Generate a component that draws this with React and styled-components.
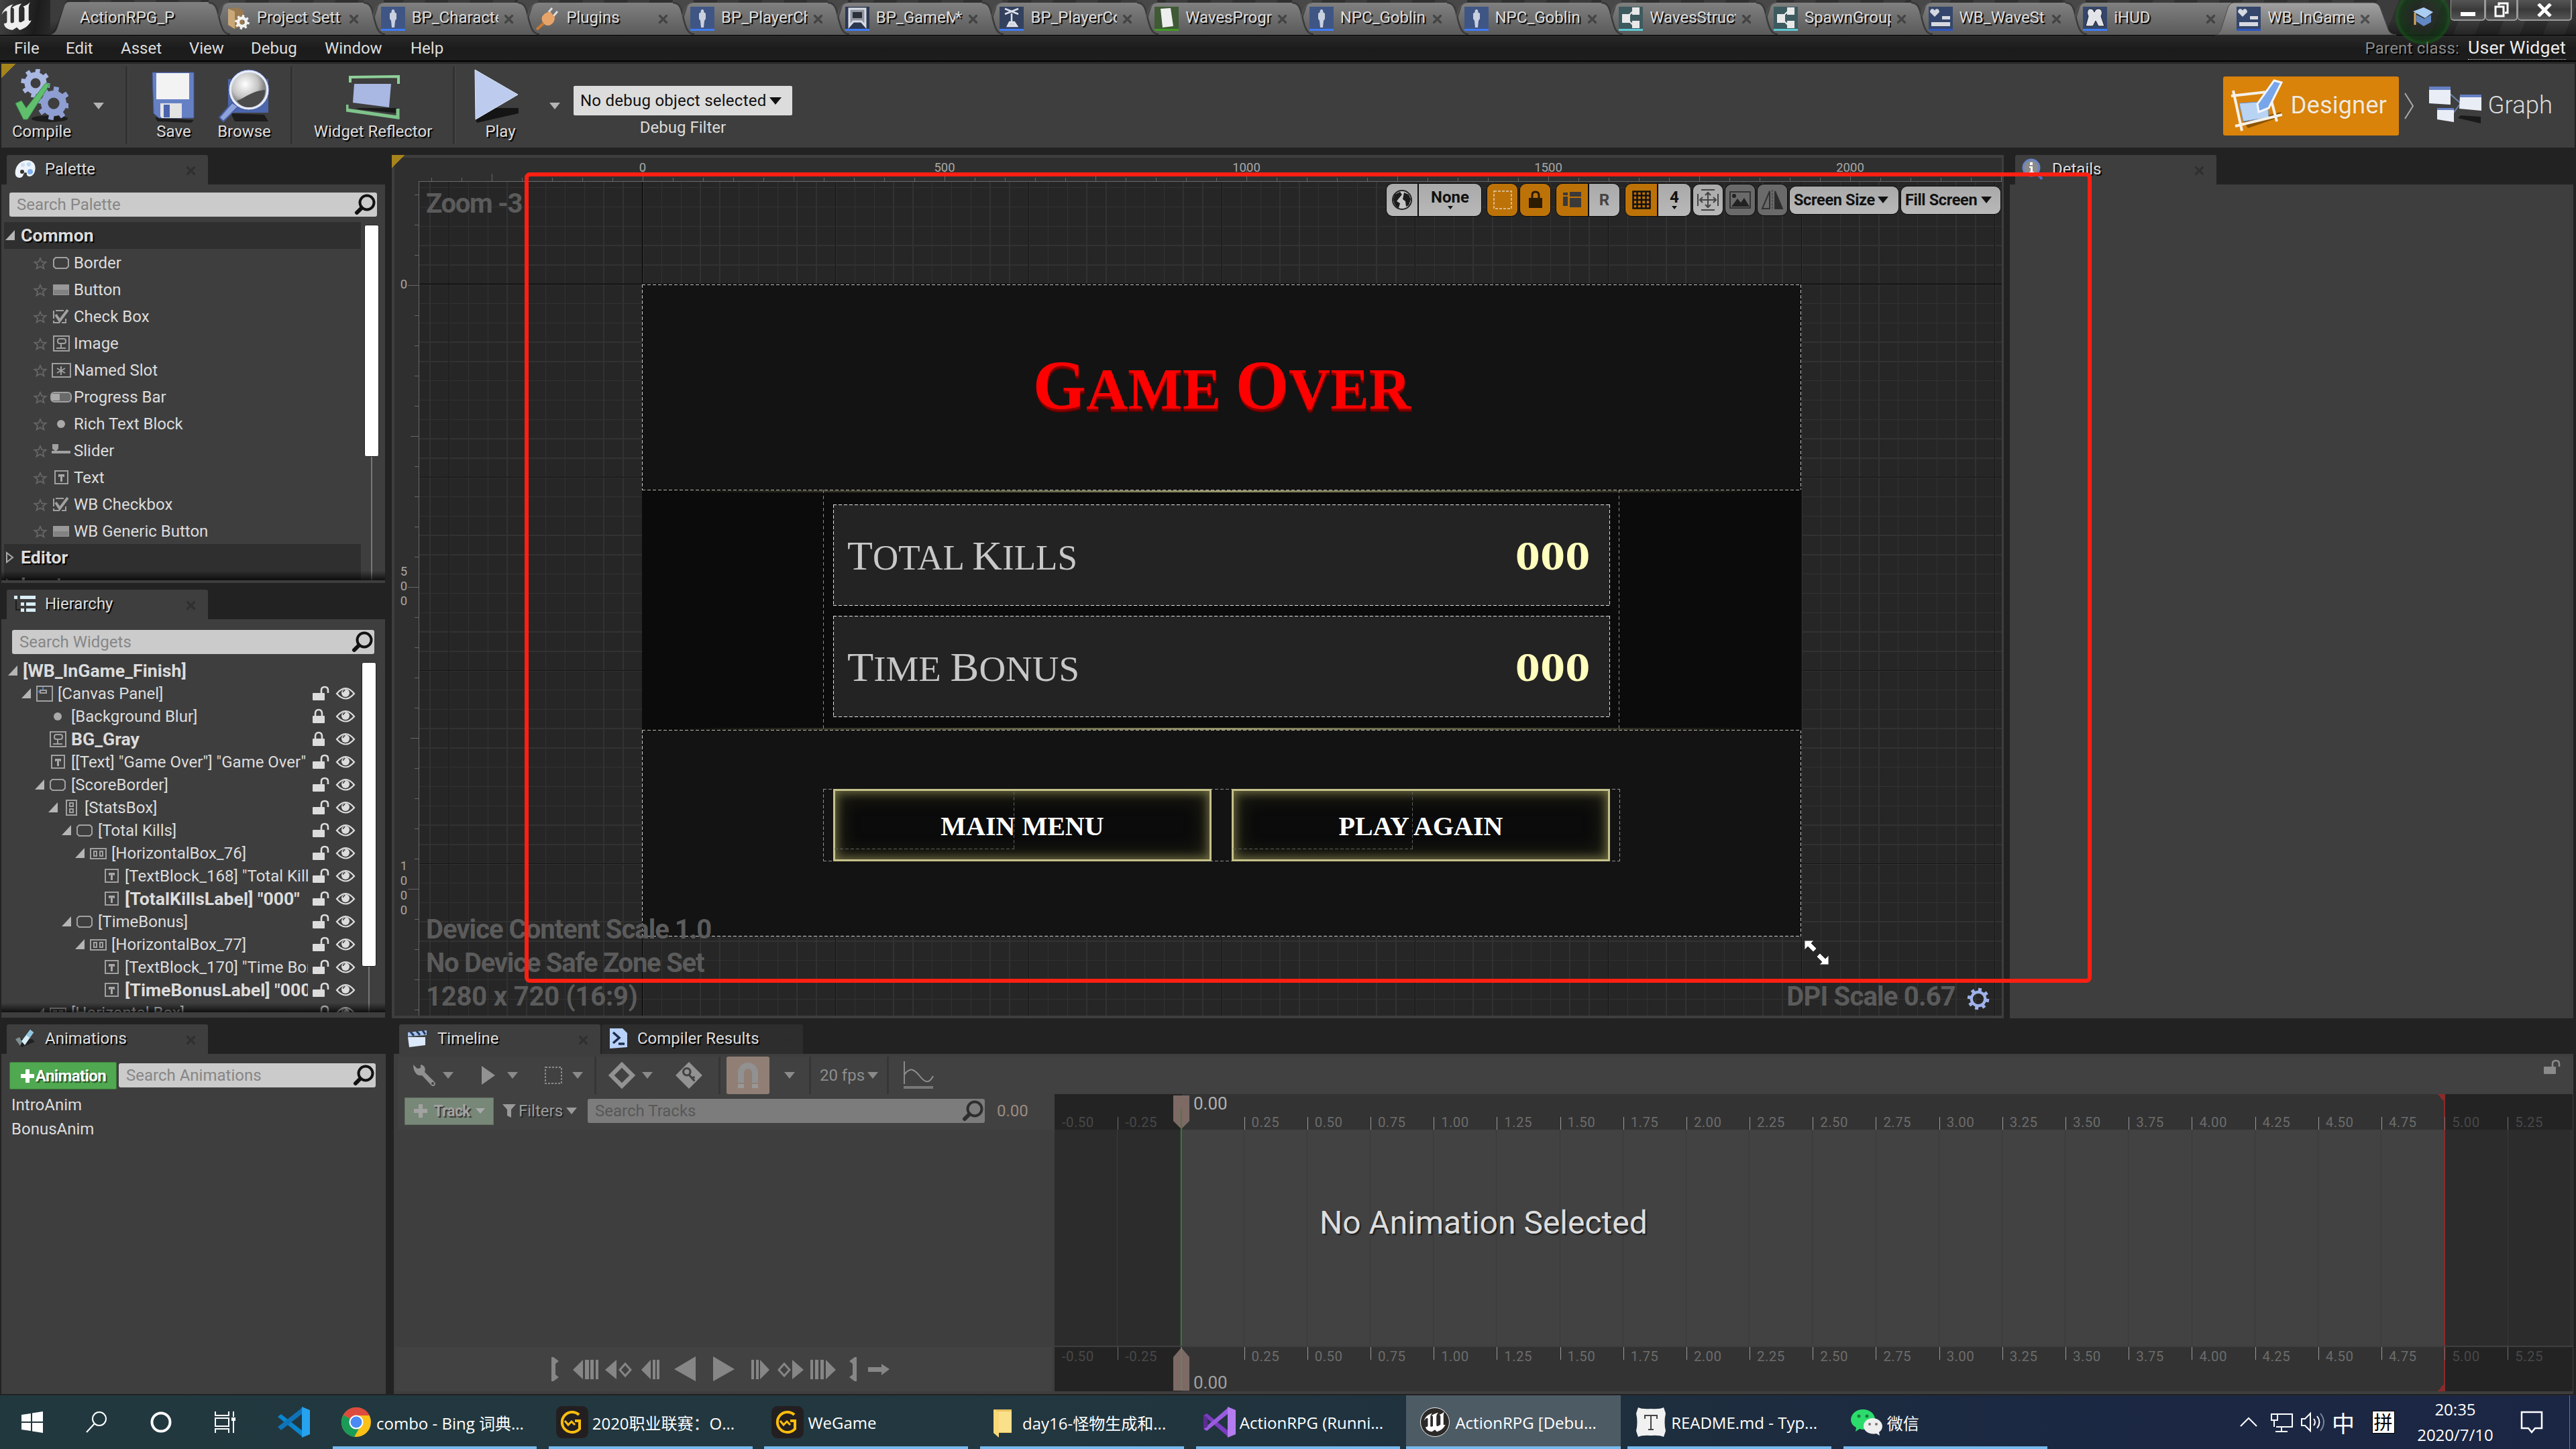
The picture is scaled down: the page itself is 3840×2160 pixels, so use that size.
import React from "react";
import styled, { createGlobalStyle } from "styled-components";

const Global = createGlobalStyle`
  * { box-sizing: border-box; }
  body { margin: 0; background: #222; overflow: hidden; }
  svg { display: block; flex: none; }
`;

const UI = `Roboto, "Liberation Sans", "Noto Sans CJK SC", sans-serif`;
const SERIF = `"Liberation Serif", "Noto Sans CJK SC", serif`;
const WIN = `"Open Sans", "Noto Sans CJK SC", sans-serif`;

const Screen = styled.div`
  position: relative;
  width: 3840px;
  height: 2160px;
  display: flex;
  flex-direction: column;
  background: #222;
  color: #dcdcdc;
  font: 24px ${UI};
  overflow: hidden;
  white-space: nowrap;
`;

/* ---------- title bar ---------- */
const TitleBar = styled.div`
  height: 53px;
  flex: none;
  display: flex;
  border-bottom: 1px solid #000;
  background: linear-gradient(#0000 60%, #0006), repeating-linear-gradient(112deg, #3c3c3c 0 30px, #303030 30px 62px);
`;
const LogoBox = styled.div`
  width: 75px;
  background: linear-gradient(100deg, #444, #1c1c1c 70%, #2a2a2a);
`;
const FileTab = styled.div`
  position: relative;
  width: ${(p) => p.w}px;
  height: 52px;
  display: flex;
  align-items: center;
  padding-left: ${(p) => p.pl}px;
  flex: none;
`;
const TabShape = styled.svg`
  position: absolute;
  left: 0;
  top: 0;
  overflow: visible;
`;
const TabIcon = styled.span`
  position: relative;
  width: 36px;
  height: 36px;
  margin: 4px 10px 0 0;
  flex: none;
`;
const TabLabel = styled.span`
  position: relative;
  width: ${(p) => p.w || 130}px;
  overflow: hidden;
  line-height: 40px;
  text-shadow: 2px 2px 1px #000;
`;
const CloseMark = styled.span`
  position: relative;
  width: 13px;
  height: 13px;
  margin-left: ${(p) => p.ml || 9}px;
  margin-top: 4px;
  opacity: ${(p) => (p.faint ? 0.6 : 0.75)};
  background: linear-gradient(45deg, #0000 39%, #2c2c2c 39% 61%, #0000 61%), linear-gradient(-45deg, #0000 39%, #2c2c2c 39% 61%, #0000 61%);
`;
const Tutorial = styled.div`
  width: 83px;
  display: flex;
  justify-content: center;
`;
const TutorialGlow = styled.div`
  position: relative;
  width: 84px;
  height: 84px;
  margin-top: -17px;
  flex: none;
  border-radius: 50%;
  display: grid;
  place-items: center;
  background: radial-gradient(#1c241c99 30%, #0f3a13aa 58%, #14601799 66%, #0000 71%);
`;
const WinButtons = styled.div`
  display: flex;
  height: 31px;
`;
const WinButton = styled.div`
  width: ${(p) => p.w}px;
  display: grid;
  place-items: center;
  border: 2px solid #9a9a9a;
  border-top: 0;
  border-left-width: 1px;
  border-radius: 0 0 5px 5px;
  background: linear-gradient(#555, #3a3a3a 50%, #555);
`;

/* ---------- menu ---------- */
const MenuBar = styled.div`
  height: 39px;
  flex: none;
  display: flex;
  align-items: center;
  padding: 0 15px 0 21px;
  background: linear-gradient(#282828, #1b1b1b 55%, #1e1e1e);
  border-bottom: 2px solid #000;
`;
const MenuItem = styled.span`
  width: ${(p) => p.w}px;
  color: #ddd;
  padding-top: 1px;
`;
const ParentClass = styled.span`
  margin-left: auto;
  color: #8a8a8a;
  text-shadow: 2px 2px 0 #000;
  letter-spacing: 0.2px;
  margin-right: 13px;
`;
const ParentLink = styled.span`
  font-size: 26.67px;
  letter-spacing: 0.2px;
  line-height: 33px;
  color: #eee;
  border-bottom: 1px dotted #ccc;
`;

/* ---------- toolbar ---------- */
const Toolbar = styled.div`
  height: 128px;
  flex: none;
  display: flex;
  margin: 0 2px;
  border-top: 3px solid #262626;
  background: #3e3e3e;
`;
const Corner = styled.div`
  width: 22px;
  height: 22px;
  margin-right: -22px;
  flex: none;
  background: linear-gradient(135deg, #a5841b 50%, #0000 50%);
`;
const ToolButton = styled.div`
  width: ${(p) => p.w}px;
  margin-left: ${(p) => p.ml || 0}px;
  padding-top: 8px;
  display: flex;
  flex-direction: column;
  align-items: center;
  text-shadow: 2px 2px 1px #000;
  line-height: 26px;
`;
const Caret = styled.i`
  flex: none;
  width: 0;
  height: 0;
  border: ${(p) => p.s || 8}px solid transparent;
  border-top: ${(p) => (p.s || 8) * 1.25}px solid ${(p) => p.c || "#b4b4b4"};
  border-bottom: 0;
  margin-left: ${(p) => p.ml || 0}px;
`;
const CaretCell = styled.div`
  width: ${(p) => p.w}px;
  padding-top: 58px;
  display: flex;
  justify-content: center;
`;
const Divider = styled.div`
  width: 4px;
  margin: 4px 0 5px ${(p) => p.ml || 0}px;
  background: #313131;
  border-right: 1px solid #484848;
`;
const DebugFilter = styled.div`
  margin-left: 14px;
  padding-top: 33px;
  display: flex;
  flex-direction: column;
  align-items: center;
  line-height: 36px;
`;
const Combo = styled.div`
  width: 326px;
  height: 44px;
  display: flex;
  align-items: center;
  padding-left: 10px;
  letter-spacing: 0.25px;
  color: #111;
  background: #dcdcdc;
  border-radius: 2px;
`;
const ModeSwitch = styled.div`
  margin-left: auto;
  display: flex;
  align-items: center;
  height: 88px;
  margin-top: 19px;
  padding-right: 33px;
  font-weight: 300;
  font-size: 36.5px;
  line-height: 40px;
`;
const DesignerMode = styled.div`
  width: 262px;
  height: 88px;
  display: flex;
  align-items: center;
  gap: 11px;
  padding: 0 0 2px 10px;
  background: #d9830b;
  border-radius: 3px;
  color: #f3e9da;
  font-weight: 400;
  text-shadow: 0 0 1px #b36800;
`;
const ModeLabel = styled.span`
  padding: 0 0 2px 9px;
`;

/* ---------- docks ---------- */
const Workspace = styled.div`
  flex: none;
  height: 1298px;
  display: flex;
  padding: 11px 4px 0 2px;
`;
const LeftColumn = styled.div`
  width: 572px;
  margin-right: 10px;
  flex: none;
  display: flex;
  flex-direction: column;
`;
const Dock = styled.div`
  display: flex;
  flex-direction: column;
  width: ${(p) => p.w || 572}px;
  height: ${(p) => p.h}px;
  margin-bottom: ${(p) => p.mb || 0}px;
  flex: none;
`;
const DockTabs = styled.div`
  display: flex;
  gap: 2px;
  padding-left: 8px;
  height: 44px;
  flex: none;
`;
const DockTab = styled.div`
  width: 300px;
  display: flex;
  align-items: center;
  padding: 0 19px 2px 10px;
  background: ${(p) => (p.dim ? "#2d2d2d" : "#3e3e3e")};
  text-shadow: 2px 2px 1px #000;
  border-radius: 3px 3px 0 0;
`;
const DockTabText = styled.span`
  margin-left: 13px;
  flex: 1;
`;
const DockBody = styled.div`
  flex: 1;
  min-height: 0;
  display: flex;
  flex-direction: column;
  background: #3e3e3e;
  padding: ${(p) => p.pad || "0"};
  overflow: hidden;
`;
const Search = styled.div`
  height: 36px;
  flex: ${(p) => (p.w ? "none" : "1")};
  width: ${(p) => (p.w ? p.w + "px" : "auto")};
  display: flex;
  align-items: center;
  justify-content: space-between;
  padding: 0 0 0 11px;
  background: ${(p) => (p.dim ? "#7c7c7c" : "#cbcbcb")};
  color: ${(p) => (p.dim ? "#585858" : "#868686")};
  border-radius: 3px;
`;
const SearchRow = styled.div`
  display: flex;
  flex: none;
  padding: ${(p) => p.pad};
`;
const Scroller = styled.div`
  position: relative;
  flex: 1;
  min-height: 0;
  display: flex;
  overflow: hidden;
  &::after {
    content: "";
    position: absolute;
    left: 0;
    right: 0;
    bottom: 0;
    height: 14px;
    background: linear-gradient(#0000, #000b);
  }
`;
const ScrollList = styled.div`
  width: ${(p) => p.w}px;
  flex: none;
`;
const ScrollTrack = styled.div`
  width: 22px;
  margin-left: ${(p) => p.ml}px;
  margin-top: ${(p) => p.mt}px;
  background: linear-gradient(90deg, #0000 10px, #777 10px 12px, #0000 12px);
`;
const ScrollThumb = styled.div`
  height: ${(p) => p.h}px;
  background: #fff;
  border: 1px solid #222;
  border-radius: 3px;
`;
const GroupHeader = styled.div`
  height: 40px;
  display: flex;
  align-items: center;
  margin-left: 4px;
  padding-left: 1px;
  gap: 7px;
  background: #2f2f2f;
  font-size: 26.67px;
  font-weight: 700;
  text-shadow: 2px 2px 1px #000;
`;
const PaletteRow = styled.div`
  height: 40px;
  display: flex;
  align-items: center;
  padding: 1px 0 0 46px;
  gap: 3px;
`;
const TreeRow = styled.div`
  height: 34px;
  display: flex;
  align-items: center;
  padding-left: ${(p) => p.indent}px;
  font-weight: ${(p) => (p.bold ? 700 : 400)};
  font-size: ${(p) => (p.bold ? 26.67 : 24)}px;
`;
const TreeLabel = styled.span`
  flex: 1;
  min-width: 0;
  overflow: hidden;
  line-height: 34px;
`;
const RowTools = styled.span`
  width: 79px;
  display: flex;
  padding-left: 6px;
  gap: 9px;
  align-items: center;
`;
const IconCell = styled.span`
  width: ${(p) => p.w || 36}px;
  flex: none;
  display: flex;
  justify-content: center;
`;

/* ---------- viewport ---------- */
const Viewport = styled.div`
  width: 2403px;
  height: 1287px;
  flex: none;
  display: grid;
  grid-template: 35px 1244px / 36px 2360px;
  border: 4px solid #3e3e3e;
  border-right-width: 3px;
  background: #2f2f2f;
  margin-right: 9px;
`;
const Ruler = styled.svg`
  font: 18.5px ${UI};
  overflow: hidden;
  fill: #a8a8a8;
`;
const CornerMark = styled.div`
  width: 20px;
  height: 20px;
  margin: -4px 0 0 -4px;
  background: linear-gradient(135deg, #a5841b 50%, #0000 50%);
`;
const Canvas = styled.div`
  position: relative;
  overflow: hidden;
  border-left: 1px solid #6a6a6a;
  border-top: 1px solid #6a6a6a;
  background:
    linear-gradient(#000, #000) 332px 0 / 1px 100% no-repeat,
    linear-gradient(#000, #000) 0 152px / 100% 1px no-repeat,
    linear-gradient(90deg, #141414 1px, #0000 1px) 44px 0 / 288px 288px,
    linear-gradient(#141414 1px, #0000 1px) 0 152px / 288px 288px,
    repeating-linear-gradient(90deg, #323232 0 1.5px, #0000 1.5px 28.8px) 44px 0 / 288px 288px,
    repeating-linear-gradient(#323232 0 1.5px, #0000 1.5px 28.8px) 0 152px / 288px 288px,
    #262626;
`;
const dash = (c = "#c9c9c9", sides = "tblr") => {
  const h = `repeating-linear-gradient(90deg, ${c} 0 5px, #0000 5px 8px)`;
  const v = `repeating-linear-gradient(${c} 0 5px, #0000 5px 8px)`;
  const m = {
    t: `${h} 0 0 / 100% 1px no-repeat`,
    b: `${h} 0 100% / 100% 1px no-repeat`,
    l: `${v} 0 0 / 1px 100% no-repeat`,
    r: `${v} 100% 0 / 1px 100% no-repeat`,
  };
  return sides.split("").map((s) => m[s]).join(",");
};
const Artboard = styled.div`
  position: absolute;
  left: 332px;
  top: 153px;
  width: 1728px;
  height: 972px;
  display: flex;
  flex-direction: column;
  background: ${dash()}, #131313;
  font-family: ${SERIF};
`;
const BoardTitle = styled.div`
  height: 306px;
  flex: none;
  display: grid;
  place-items: center;
  color: #f00;
  font-weight: 700;
  font-size: 87px;
  line-height: 100px;
  text-shadow: 0 3px 0 #8d0000, 1px 5px 0 #600000;
  b { font-size: 103px; }
`;
const Stretch = styled.span`
  display: inline-block;
  transform: scaleX(${(p) => p.x});
  transform-origin: ${(p) => p.o || "center"};
`;
const ScoreBorder = styled.div`
  height: 359px;
  flex: none;
  padding: 22px 285px 0;
  display: flex;
  flex-direction: column;
  gap: 15px;
  background:
    ${dash("#b5b5a8", "tb")},
    linear-gradient(90deg, #0000 3%, #96956a 50%, #0000 97%) 0 1px / 100% 3px no-repeat,
    linear-gradient(90deg, #0000 3%, #96956a 50%, #0000 97%) 0 calc(100% - 1px) / 100% 3px no-repeat,
    repeating-linear-gradient(#8a8a8a 0 5px, #0000 5px 9px) 270px 0 / 1px 100% no-repeat,
    repeating-linear-gradient(#8a8a8a 0 5px, #0000 5px 9px) 1456px 0 / 1px 100% no-repeat,
    #0b0b0b;
`;
const StatRow = styled.div`
  height: 151px;
  width: 1158px;
  flex: none;
  display: flex;
  align-items: center;
  justify-content: space-between;
  padding: 2px 30px 0 21px;
  background: ${dash("#e0e0e0")}, #232323;
  color: #c8c8c8;
  font-size: 53px;
  big { font-size: 62px; }
`;
const Score = styled.span`
  font-size: 61px;
  font-weight: 700;
  color: #ffffbd;
`;
const ButtonBar = styled.div`
  margin: 87px 270px 0;
  width: 1188px;
  height: 108px;
  display: flex;
  gap: 30px;
  padding: 0 15px;
  background: ${dash("#8f8f8f")};
`;
const GoldButton = styled.div`
  flex: 1;
  display: grid;
  place-items: center;
  position: relative;
  padding-top: 3px;
  color: #fff;
  font-size: 40px;
  font-weight: 700;
  background: ${dash("#fff")}, #0b0b0b;
  box-shadow: inset 0 0 0 3px #c5c18a, inset 0 0 14px 5px #6f6d43, inset 0 0 30px 6px #33321d;
  &::before {
    content: "";
    position: absolute;
    left: 2px;
    top: 4px;
    width: 268px;
    height: 86px;
    background: ${dash("#5d5d5d", "br")};
  }
`;
const CanvasNote = styled.div`
  position: absolute;
  ${(p) => (p.right ? `right: ${p.right}px;` : "left: 10px;")}
  ${(p) => (p.top ? `top: ${p.top}px;` : `bottom: ${p.bottom || 3}px;`)}
  font-size: 40px;
  font-weight: 700;
  letter-spacing: ${(p) => p.ls || -1}px;
  line-height: 50px;
  color: #5b5b5b;
`;
const OnCanvas = styled.div`
  position: absolute;
  left: ${(p) => p.x}px;
  top: ${(p) => p.y}px;
`;
const ViewTools = styled.div`
  position: absolute;
  right: 1px;
  top: 2px;
  height: 50px;
  display: flex;
  align-items: center;
  gap: 2px;
  color: #111;
  font-weight: 700;
  font-size: 24px;
`;
const tone = {
  light: "linear-gradient(#a9a9a9, #b9b9b9)",
  orange: "#bd7208",
  dark: "#6a6a6a",
};
const Pill = styled.div`
  display: flex;
  height: ${(p) => p.h || 50}px;
  margin-left: ${(p) => p.ml || 0}px;
  border: 1px solid #0c0c0c;
  border-radius: 10px;
  overflow: hidden;
`;
const PillPart = styled.div`
  width: ${(p) => p.w}px;
  display: flex;
  flex-direction: column;
  align-items: center;
  justify-content: center;
  background: ${(p) => tone[p.t || "light"]};
  & + & { border-left: ${(p) => (p.nb ? 0 : 2)}px solid #0c0c0c; }
`;
const PillText = styled.div`
  width: ${(p) => p.w}px;
  display: flex;
  align-items: center;
  padding-left: 6px;
  font-size: 23.5px;
  letter-spacing: -0.35px;
  background: ${tone.light};
`;
const Tiny = styled.span`
  line-height: 26px;
  margin-top: ${(p) => (p.up ? -4 : 0)}px;
  color: ${(p) => p.c || "inherit"};
`;
const Details = styled(Dock)`
  width: 840px;
`;

/* ---------- timeline ---------- */
const Bottom = styled.div`
  flex: none;
  height: 562px;
  display: flex;
  gap: 12px;
  padding: 9px 4px 2px 2px;
`;
const AnimButton = styled.div`
  width: 160px;
  height: 41px;
  margin: -2px 3px 0 0;
  display: flex;
  align-items: center;
  justify-content: center;
  gap: 1px;
  font-weight: 700;
  font-size: 24px;
  color: #fff;
  letter-spacing: -0.6px;
  text-shadow: 2px 2px 1px #0008;
  background: #50a850;
  border: 1px solid #3c7a3c;
  border-radius: 2px;
`;
const AnimItem = styled.div`
  height: 36px;
  line-height: 36px;
  padding-left: 15px;
`;
const TimeBar = styled.div`
  height: 56px;
  flex: none;
  margin: 4px 0 0 6px;
  display: flex;
  align-items: center;
  color: #8d8d8d;
  background: #414141;
`;
const Slot = styled.div`
  width: ${(p) => p.w}px;
  height: 56px;
  display: flex;
  align-items: center;
  justify-content: center;
  flex: none;
  padding-left: ${(p) => p.pl || 0}px;
  margin-left: ${(p) => p.ml || 0}px;
  border-right: ${(p) => (p.sep ? "3px solid #363636" : "0")};
`;
const MagnetSlot = styled(Slot)`
  background: #917f75;
  border-radius: 3px;
`;
const TimeMain = styled.div`
  flex: 1;
  min-height: 0;
  display: flex;
`;
const TrackPane = styled.div`
  width: 985px;
  flex: none;
  display: flex;
  flex-direction: column;
  justify-content: space-between;
`;
const TrackHead = styled.div`
  height: 53px;
  margin-left: 6px;
  padding: 0 0 3px 10px;
  display: flex;
  align-items: center;
  background: #414141;
  color: #9a9a9a;
`;
const TrackButton = styled.div`
  width: 133px;
  height: 41px;
  display: flex;
  align-items: center;
  justify-content: center;
  gap: 8px;
  font-weight: 700;
  font-size: 23px;
  letter-spacing: -0.8px;
  color: #a2a2a2;
  text-shadow: 2px 2px 1px #333;
  background: #788878;
  border: 1px solid #647364;
`;
const FilterBox = styled.div`
  width: 140px;
  display: flex;
  align-items: center;
  padding-left: 12px;
  text-shadow: 2px 2px 1px #222;
`;
const TimeValue = styled.span`
  margin-left: 18px;
  color: #9c8b80;
`;
const Transport = styled.div`
  height: 66px;
  margin: 0 4px 4px 2px;
  background: #424242;
  padding-left: 230px;
`;
const Curves = styled.div`
  position: relative;
  width: 2263px;
  flex: none;
  display: flex;
  flex-direction: column;
  padding-bottom: 4px;
`;
const zones = (a, b) => `linear-gradient(90deg, ${a} 190px, ${b} 190px 2072px, ${a} 2072px)`;
const TimeRuler = styled.div`
  height: ${(p) => p.h}px;
  flex: none;
  display: flex;
  align-items: ${(p) => (p.bottom ? "flex-start" : "flex-end")};
  margin-top: ${(p) => (p.bottom ? 2 : 0)}px;
  overflow: hidden;
  background:
    linear-gradient(${(p) => (p.bottom ? "to bottom right" : "to top right")}, #0000 50%, #8a2a2a 50%) 2062px ${(p) => (p.bottom ? "100%" : "0")} / 9px 11px no-repeat,
    linear-gradient(#8a2a2a, #8a2a2a) 2071px 0 / 2px 100% no-repeat,
    ${zones("#232323", "#333")};
`;
const TimeMark = styled.span`
  width: 94.2px;
  flex: none;
  height: 19px;
  padding-left: 10px;
  line-height: ${(p) => (p.bottom ? 29 : 16)}px;
  font-size: 20.5px;
  letter-spacing: 0.4px;
  color: ${(p) => (p.out ? "#484848" : "#6c6c6c")};
  border-left: 1px solid ${(p) => (p.notick ? "transparent" : p.out ? "#707070" : "#9a9a9a")};
`;
const TimeBody = styled.div`
  flex: 1;
  display: flex;
  align-items: center;
  background:
    linear-gradient(#347a2f, #347a2f) 188px 0 / 2px 100% no-repeat,
    linear-gradient(#8a2a2a, #8a2a2a) 2071px 0 / 2px 100% no-repeat,
    repeating-linear-gradient(90deg, #0000 0 93.2px, #3a3a3a 93.2px 94.2px),
    ${zones("#2c2c2c", "#424242")};
`;
const Notice = styled.div`
  padding: 0 0 46px 395px;
  font-size: 48px;
  color: #ddd;
  text-shadow: 2px 2px 2px #0009;
`;
const PlayHead = styled.div`
  position: absolute;
  left: 176px;
  ${(p) => (p.bottom ? "bottom: 4px;" : "top: 1px;")}
  display: flex;
  align-items: ${(p) => (p.bottom ? "flex-end" : "flex-start")};
  gap: 5px;
  font-size: 26px;
  line-height: 26px;
  color: ${(p) => (p.bottom ? "#a0a0a0" : "#b0b0b0")};
`;
const LockCorner = styled.div`
  margin: -24px 19px 0 auto;
`;

/* ---------- annotation ---------- */
const RedFrame = styled.div`
  position: absolute;
  left: 782px;
  top: 257px;
  width: 2336px;
  height: 1208px;
  border: 6px solid #ff2013;
  border-radius: 8px;
`;

/* ---------- taskbar ---------- */
const Taskbar = styled.div`
  height: 80px;
  flex: none;
  display: flex;
  background: linear-gradient(90deg, #22383f 0%, #22373f 40%, #1e2f3d 62%, #1b2842 80%, #1b2644 100%);
  font: 24px ${WIN};
  color: #fff;
`;
const SysButton = styled.div`
  width: ${(p) => p.w || 96}px;
  padding-left: ${(p) => p.pl || 0}px;
  display: grid;
  place-items: center;
`;
const Task = styled.div`
  width: 320px;
  margin-right: 1.7px;
  flex: none;
  display: flex;
  align-items: center;
  padding-left: 19px;
  gap: 6px;
  background:
    linear-gradient(#76b9ed, #76b9ed) ${(p) => (p.active ? "0" : "8px")} 100% / ${(p) => (p.active ? 320 : 304)}px 4px no-repeat,
    ${(p) => (p.active ? "#4d5b65" : "transparent")};
`;
const Tray = styled.div`
  margin-left: auto;
  display: flex;
  align-items: center;
  padding-right: 9px;
`;
const TrayCell = styled.div`
  width: ${(p) => p.w}px;
  display: flex;
  justify-content: center;
  font-size: ${(p) => p.fs || 24}px;
`;
const Ime = styled.span`
  width: 34px;
  height: 34px;
  display: grid;
  place-items: center;
  background: #fff;
  border: 1px solid #000;
  color: #000;
  font-size: 28px;
  line-height: 30px;
`;
const Clock = styled.div`
  width: 130px;
  margin-left: 5px;
  text-align: center;
  font-size: 24px;
  line-height: 38px;
`;
const ShowDesktop = styled.div`
  width: 1px;
  height: 80px;
  margin-left: 7px;
  background: #6b7388;
`;

/* ---------- icons ---------- */
const Unreal = ({ s = 56, c = "#eee" }) => (
  <svg width={s} height={s} viewBox="0 0 48 48">
    <path fill={c} d="M2 22C5 12 12 8 19 6c-3 3-4 5-4 8v17c0 2 2 3 5 1V14c0-2-1-3-3-3 4-3 9-5 14-6-3 3-4 5-4 8v17c0 2 2 2 3 2l5-3V13c0-2-1-3-2-4 4-1 7-3 10-6-2 4-2 6-2 9v16c0 2 2 2 4 1-4 8-10 12-17 14l-4-4-6 4C9 42 5 37 6 33c2 1 4 0 4-2V17c0-3-5-1-8 5z" />
  </svg>
);
const Gear = ({ cx, cy, r, c, hole = 0.6 }) => (
  <g transform={`translate(${cx} ${cy})`}>
    <circle r={r * hole} fill="none" stroke={c} strokeWidth={r * (hole > 0.6 ? 0.28 : 0.45)} />
    {[0, 45, 90, 135, 180, 225, 270, 315].map((a) => (
      <rect key={a} x={-r * 0.17} y={-r * 1.08} width={r * 0.34} height={r * 0.4} fill={c} transform={`rotate(${a + 10})`} />
    ))}
  </g>
);
const CompileIcon = () => (
  <svg width="80" height="80" viewBox="0 0 80 80">
    <ellipse cx="52" cy="74" rx="27" ry="5" fill="#1c1c1c" />
    <Gear cx={31} cy={21} r={20} c="#a9b8e2" />
    <Gear cx={58} cy={51} r={23} c="#8e9ed2" />
    <path d="M1 51l9-4 7 11L46 21l6 2-33 52h-6z" fill="#5fbf6c" stroke="#3c8a48" />
  </svg>
);
const SaveIcon = () => (
  <svg width="80" height="80" viewBox="0 0 80 80">
    <path d="M12 72l58 4-4 4-50-2z" fill="#1c1c1c" />
    <path d="M8 5h62v68H18L10 66z" fill="#6680c4" stroke="#44589a" />
    <path d="M14 6h49v39H14z" fill="#f3f3f3" />
    <path d="M20 51h32v22H22l-2-3z" fill="#e3e3e3" />
    <path d="M25 53h9v19h-9z" fill="#4a64ad" />
  </svg>
);
const BrowseIcon = () => (
  <svg width="80" height="80" viewBox="0 0 80 80">
    <defs>
      <radialGradient id="lens" cx="40%" cy="35%"><stop offset="0" stopColor="#fff" /><stop offset=".7" stopColor="#c4c4c4" /><stop offset="1" stopColor="#888" /></radialGradient>
    </defs>
    <path d="M20 66l50 2 6 10-50 0z" fill="#1c1c1c" />
    <path d="M16 15h60v50H16z" fill="#4c66ad" />
    <path d="M22 50l-19 22 6 6 22-22z" fill="#8ea3dc" stroke="#485ea3" strokeWidth="2" />
    <circle cx="47" cy="31" r="28" fill="url(#lens)" stroke="#e6ebfa" strokeWidth="4" />
    <path d="M29 47c10-2 20-14 42-16 1 14-10 26-24 26-8 0-14-4-18-10z" fill="#4b4b4b" />
    <circle cx="47" cy="31" r="30" fill="none" stroke="#44589a" />
  </svg>
);
const ReflectorIcon = () => (
  <svg width="80" height="80" viewBox="0 0 80 80">
    <path d="M14 58l62 0 2 8-58-6z" fill="#1a1a1a" />
    <path d="M6 20V12l72-1v11" fill="none" stroke="#8fd09a" strokeWidth="4" />
    <path d="M1 53v8l76 11V59" fill="none" stroke="#7fc48b" strokeWidth="5" />
    <path d="M12 22h55l-3 35-54-7z" fill="#a9b7e3" />
  </svg>
);
const PlayIcon = () => (
  <svg width="80" height="80" viewBox="5 0 80 80">
    <path d="M8 76l20-18h44v8L10 80z" fill="#141414" />
    <path d="M7 1l64 37L8 75z" fill="#bccbee" stroke="#dde6fa" />
  </svg>
);
const DesignerIcon = () => (
  <svg width="80" height="80" viewBox="0 0 80 80">
    <path d="M20 64l56-14 3 6-52 18z" fill="#8c5300" />
    <path d="M14 37l42-3 2 24-38 6z" fill="#b9d4f2" stroke="#6a93cf" />
    <path d="M2 26l62-7M8 71l70-17M5 18l13 60M58 18l12 46" stroke="#f6f1e7" strokeWidth="4" />
    <path d="M41 38L66 3l11 3-19 38-15 6z" fill="#79a6ea" stroke="#f3f7ff" strokeWidth="3" />
  </svg>
);
const GraphIcon = () => (
  <svg width="80" height="60" viewBox="0 0 80 60">
    <path d="M48 44l30 2v10l-34-8z" fill="#1a1a1a" />
    <path d="M30 10l18 16-12 16" stroke="#6d83ad" fill="none" strokeWidth="2" />
    <path d="M1 1h32v27L1 26z" fill="#e9edf6" /><path d="M1 1h32v5H1z" fill="#6680c4" />
    <path d="M47 14h32v23L46 34z" fill="#e9edf6" /><path d="M47 13h32v4H47z" fill="#6680c4" />
    <path d="M13 34h25v20l-25-4z" fill="#e9edf6" /><path d="M13 33h25v3H13z" fill="#6680c4" />
  </svg>
);
const Magnifier = ({ c = "#111" }) => (
  <svg width="34" height="34" viewBox="0 0 34 34">
    <circle cx="19" cy="14" r="10.5" fill="none" stroke={c} strokeWidth="4" />
    <path d="M11 22l-7 7" stroke={c} strokeWidth="6" strokeLinecap="round" />
  </svg>
);
const FileIcon = ({ k }) => {
  const bg = { pawn: "#3f5685", pad: "#2c3850", ctrl: "#33415f", wave: "#3f5a35", struct: "#3d5a5f", widget: "#34466b", hud: "#34466b" }[k];
  const bar = { wave: "#3f9a24", struct: "#5cc8d2", widget: "#2d57c0" }[k] || "#3f7cf5";
  if (k === "proj")
    return (
      <svg width="36" height="36"><path d="M3 3l14-2 9 5v22L12 33 3 27z" fill="#9a7a50" /><path d="M3 3l10 4v26L3 27z" fill="#c9a878" /><Gear cx={24} cy={23} r={10} c="#f2f2f2" /></svg>
    );
  if (k === "plug")
    return (
      <svg width="36" height="36"><path d="M20 8l5-6M27 14l6-7" stroke="#ddd" strokeWidth="3" /><path d="M10 15c3-5 9-8 13-7l6 8c0 6-4 11-9 12-6 1-12-6-10-13z" fill="#e8a468" /><path d="M12 25l-10 9" stroke="#c97a35" strokeWidth="4" /></svg>
    );
  return (
    <svg width="36" height="36">
      <rect width="36" height="36" fill={bg} />
      {k === "pawn" && <path d="M18 4c2 0 3 3 2 4l3 2v8l-2 3-1 10h-4l-1-10-2-3v-8l3-2c-1-1 0-4 2-4z" fill="#c9d0de" />}
      {k === "pad" && <><path d="M6 3h24v26l-6-7H12l-6 7z" fill="#8f949e" stroke="#d8dce6" strokeWidth="3" /><path d="M11 8h14v9H11z" fill="#2a2f3a" /></>}
      {k === "ctrl" && <path d="M8 3l20 8M28 3L8 11M18 10v12M12 29h14l-4-6h-7z" stroke="#dfe3ec" strokeWidth="2.500" fill="#cfd3dc" />}
      {k === "wave" && <path d="M9 3l15-1 4 27-16 2z" fill="#eee" />}
      {k === "struct" && <path d="M6 12h10v11H6zM21 2h9v9h-9zM21 22h9v9h-9zM16 12l6-6M16 22l6 6" fill="#e8e8e8" stroke="#e8e8e8" strokeWidth="2" />}
      {k === "widget" && <path d="M9 15L2 8c0-6 6-6 7-2 1-4 7-4 7 2zM20 14h12v5H20zM4 23h28v6H4z" fill="#d6d9e0" />}
      {k === "hud" && <path d="M4 29L8 14C5 9 7 3 11 3c3 0 5 2 6 5 1-3 3-5 6-5 5 0 7 6 4 11l5 15h-9l-4-8-4 8z" fill="#e2e4ea" stroke="#222" />}
      <rect y="33" width="36" height="3" fill={bar} />
    </svg>
  );
};
const g = { fill: "none", stroke: "#a0a0a0", strokeWidth: 2 };
const WidgetIcon = ({ k }) => (
  <svg width="32" height="26" viewBox="0 0 32 26">
    {k === "border" && <path d="M8 5h16l3 3v10l-3 3H8l-3-3V8z" {...g} />}
    {k === "button" && <><rect x="4" y="5" width="24" height="16" fill="#999" /><rect x="5" y="13" width="22" height="7" fill="#828282" /></>}
    {k === "check" && <><path d="M20 4H5v18h18V13" {...g} strokeDasharray="12 3" /><path d="M8 10l6 9L26 3" {...g} strokeWidth="4" /></>}
    {k === "image" && <><rect x="5" y="2" width="23" height="22" {...g} /><rect x="11" y="6" width="12" height="7" rx="3" {...g} /><path d="M16 13v7M9 20h14" {...g} /></>}
    {k === "slot" && <><rect x="3" y="3" width="27" height="20" {...g} /><path d="M16 7v13M10 10l12 7M22 10l-12 7" {...g} /></>}
    {k === "progress" && <><rect x="1" y="6" width="30" height="14" rx="5" fill="#6a6a6a" stroke="#a0a0a0" strokeWidth="2" /><rect x="2" y="8" width="12" height="10" fill="#aaa" /></>}
    {k === "dot" && <circle cx="16" cy="13" r="6" fill="#aaa" />}
    {k === "slider" && <path d="M3 3h9v7l-3 3h21v4H2v-4h5L3 10z" fill="#a0a0a0" />}
    {k === "text" && <><rect x="7" y="3" width="19" height="19" {...g} /><path d="M12 8h9v4h-2v-1h-1v8h-3v-8h-1v1h-2z" fill="#a8a8a8" /></>}
    {k === "canvas" && <><rect x="5" y="2" width="23" height="22" {...g} /><rect x="10" y="8" width="9" height="4" {...g} /><path d="M14 3v4M5 10h4" stroke="#4a7fc0" strokeWidth="2" /></>}
    {k === "vbox" && <><rect x="9" y="2" width="15" height="22" {...g} /><rect x="14" y="6" width="5" height="5" {...g} /><rect x="14" y="15" width="5" height="5" {...g} /></>}
    {k === "hbox" && <><rect x="5" y="6" width="23" height="15" {...g} /><rect x="10" y="10" width="4" height="7" {...g} /><rect x="19" y="10" width="4" height="7" {...g} /></>}
  </svg>
);
const Star = () => (
  <svg width="24" height="22" viewBox="0 0 24 22"><path d="M12 4l2.4 5.3 6.2.5-4.700 3.800 1.600 5.800-5.500-3.200-5.500 3.200 1.600-5.800-4.700-3.800 6.200-.5z" fill="none" stroke="#666" strokeWidth="1.800" /></svg>
);
const Tri = ({ open = true }) => (
  <svg width="17" height="18" viewBox="0 0 17 18">
    {open ? <path d="M1 16h14V1z" fill="#b5b5b5" /> : <path d="M3 2v14l9-7z" fill="none" stroke="#aaa" strokeWidth="2" />}
  </svg>
);
const Lock = ({ open, c = "#dcdcdc" }) => (
  <svg width="26" height="24" viewBox="0 0 26 24">
    <rect x="1" y="11" width="18" height="11" rx="1" fill={c} />
    <path d={open ? "M14 11V7q0-5 5-5t5 5v4" : "M5 11V8q0-6 5-6t5 6v3"} fill="none" stroke={c} strokeWidth="2.600" />
  </svg>
);
const Eye = () => (
  <svg width="30" height="22" viewBox="0 0 30 22">
    <path d="M2 11Q15-5 28 11 15 26 2 11z" fill="none" stroke="#dcdcdc" strokeWidth="2.200" />
    <circle cx="15" cy="10" r="6" fill="#dcdcdc" />
    <path d="M11.500 9q.5-3 3-3.500" stroke="#3e3e3e" fill="none" strokeWidth="1.400" />
  </svg>
);
const PaletteIcon = () => (
  <svg width="34" height="30" viewBox="0 0 34 30">
    <path d="M3 17C5 6 14 1 22 2c9 1 12 8 10 16-2 8-8 9-11 7-2-2 0-5-3-5-4 0-2 8-9 8-6 0-7-6-6-11z" fill="#eef3fa" />
    <circle cx="13" cy="19" r="3" fill="#333" /><circle cx="25" cy="19" r="4" fill="#7fb0f0" /><circle cx="23" cy="8" r="3" fill="#b9d8f8" /><circle cx="14" cy="9" r="3" fill="#cfe0f5" />
  </svg>
);
const HierIcon = () => (
  <svg width="34" height="28" viewBox="0 0 34 28">
    <path d="M1 2h5v5H1zM10 2h23v5H10zM11 12h5v5h-5zM19 12h14v5H19zM11 21h5v5h-5zM19 21h14v5H19z" fill="#d9edf5" /><path d="M4 9v14h6" stroke="#1c1c1c" fill="none" strokeWidth="2" />
  </svg>
);
const AnimIcon = () => (
  <svg width="34" height="34" viewBox="0 0 34 34"><path d="M4 18l8 12 20-8-4-4z" fill="#222" /><path d="M3 18l6-3 4 7-3 6z" fill="#7d8f90" /><path d="M12 21L25 4l5 4-13 19z" fill="#d7eef8" /><path d="M19 12l6-8 5 4-6 8z" fill="#8fc6e4" /></svg>
);
const TimelineIcon = () => (
  <svg width="34" height="30" viewBox="0 0 34 30"><path d="M3 6l28-3v7L3 12z" fill="#a5c2ea" /><path d="M3 13h26v12L5 28z" fill="#dce9fa" /><path d="M7 5l5 6M16 4l5 6M25 3l4 6" stroke="#263a63" strokeWidth="3" /></svg>
);
const CompilerIcon = () => (
  <svg width="30" height="32" viewBox="0 0 30 32"><path d="M2 1h19l7 7v21l-26 2z" fill="#b9d2fb" /><path d="M7 7l9 8-9 8M15 24h9" stroke="#1e2c4b" strokeWidth="3.500" fill="none" /></svg>
);
const DetailsIcon = () => (
  <svg width="32" height="34" viewBox="0 0 32 34"><path d="M21 22l9 10" stroke="#4d73c4" strokeWidth="4" /><circle cx="14" cy="15" r="12" fill="#8b8b8b" stroke="#6683c6" strokeWidth="3" /><path d="M11 13h5v8h2v2h-7v-2h2v-6h-2zM12 7h4v4h-4z" fill="#fff" /></svg>
);

const diamond = (
  <path d="M20 5l15 15-15 15L5 20z" fill="none" stroke="#929292" strokeWidth="6" />
);

/* ---------- data ---------- */
const fileTabs = [
  ["Project Sett", "proj"], ["BP_Character", "pawn"], ["Plugins", "plug"], ["BP_PlayerChar", "pawn"], ["BP_GameM", "pad", "*"],
  ["BP_PlayerCon", "ctrl"], ["WavesProgress", "wave"], ["NPC_Goblin", "pawn"], ["NPC_Goblin", "pawn"], ["WavesStruct", "struct"],
  ["SpawnGroup", "struct"], ["WB_WaveSt", "widget"], ["iHUD", "hud"],
];
const palette = [
  ["border", "Border"], ["button", "Button"], ["check", "Check Box"], ["image", "Image"], ["slot", "Named Slot"], ["progress", "Progress Bar"],
  ["dot", "Rich Text Block"], ["slider", "Slider"], ["text", "Text"], ["check", "WB Checkbox"], ["button", "WB Generic Button"],
];
const tree = [
  [1, 1, "canvas", "[Canvas Panel]"],
  [2, 0, "dot", "[Background Blur]", 0, 1],
  [2, 0, "image", "BG_Gray", 1, 1],
  [2, 0, "text", '[[Text] "Game Over"] "Game Over"'],
  [2, 1, "border", "[ScoreBorder]"],
  [3, 1, "vbox", "[StatsBox]"],
  [4, 1, "border", "[Total Kills]"],
  [5, 1, "hbox", "[HorizontalBox_76]"],
  [6, 0, "text", '[TextBlock_168] "Total Kills"'],
  [6, 0, "text", '[TotalKillsLabel] "000"', 1],
  [4, 1, "border", "[TimeBonus]"],
  [5, 1, "hbox", "[HorizontalBox_77]"],
  [6, 0, "text", '[TextBlock_170] "Time Bonus"'],
  [6, 0, "text", '[TimeBonusLabel] "000"', 1],
  [2, 1, "hbox", "[Horizontal Box]"],
];
const times = Array.from({ length: 24 }, (_, i) => (i - 2) * 0.25);

const Marks = ({ bottom }) => (
  <TimeRuler h={bottom ? 66 : 53} bottom={bottom}>
    {times.map((t, i) => (
      <TimeMark key={t} bottom={bottom} out={t < 0 || t >= 5} notick={t === 0 || i === 0}>
        {t === 0 ? "" : t.toFixed(2)}
      </TimeMark>
    ))}
  </TimeRuler>
);

const HRuler = () => (
  <Ruler width="2360" height="35">
    {Array.from({ length: 53 }, (_, i) => i - 7).map((n) => (
      <rect key={n} x={Math.round(333.5 + n * 45)} y={n % 10 === 0 ? 17 : n % 5 === 0 ? 24 : 30} width="1" height="20" fill="#666" />
    ))}
    {[0, 500, 1000, 1500, 2000].map((v) => (
      <text key={v} x={334 + v * 0.9} y="21" textAnchor="middle">{v}</text>
    ))}
  </Ruler>
);
const VRuler = () => (
  <Ruler width="36" height="1244">
    {Array.from({ length: 28 }, (_, i) => i - 3).map((n) => (
      <rect key={n} x={n % 10 === 0 ? 20 : n % 5 === 0 ? 24 : 30} y={155 + n * 45} width="20" height="1" fill="#666" />
    ))}
    {[0, 500, 1000].map((v) =>
      String(v).split("").map((d, i, a) => (
        <text key={v + "-" + i} x="14" y={160 + v * 0.9 + (i - (a.length - 1) / 2) * 22} textAnchor="middle">{d}</text>
      ))
    )}
  </Ruler>
);

const Separator = () => (
  <TabShape width="32" height="52">
    <path d="M-16 0H14V4Q7 4 5 12L0 28Q-5 4 -16 4z" fill="#484848" />
    <path d="M-16 4Q-6 4-3 16C2 36 4 51 16 51" fill="none" stroke="#3a3a3a" strokeWidth="2.500" />
    <path d="M-2 26Q2 4 14 4" fill="none" stroke="#555" strokeWidth="1.500" />
  </TabShape>
);

export default function App() {
  return (
    <Screen>
      <Global />
      <TitleBar>
        <LogoBox><Unreal s={50} /></LogoBox>
        <FileTab w={252} pl={44}>
          <TabShape width="252" height="52">
            <defs>
              <linearGradient id="tabGrey" x2="0" y2="1"><stop offset="0" stopColor="#808080" /><stop offset="1" stopColor="#5a5a5a" /></linearGradient>
              <linearGradient id="tabOn" x2="0" y2="1"><stop offset="0" stopColor="#a2a2a2" /><stop offset="1" stopColor="#6c6c6c" /></linearGradient>
            </defs>
            <path d="M0 52Q8 50 11 40L20 12Q22 3 28 3H238Q246 3 249 14L258 52z" fill="url(#tabGrey)" />
          </TabShape>
          <TabLabel w={150}>ActionRPG_P</TabLabel>
        </FileTab>
        {fileTabs.map(([label, k, star], i) => (
          <FileTab key={i} w={i === 12 ? 229 : 230.7} pl={10}>
            <TabShape width="232" height="52"><rect y="4" width="232" height="48" fill="url(#tabGrey)" /></TabShape>
            <Separator />
            <TabIcon><FileIcon k={k} /></TabIcon>
            <TabLabel w={star ? 118 : 129}>{label}</TabLabel>
            {star && <TabLabel w={11}>*</TabLabel>}
            <CloseMark faint />
          </FileTab>
        ))}
        <FileTab w={246} pl={10}>
          <TabShape width="262" height="52"><path d="M-22 52Q-14 50 -12 40L-3 12Q0 4 6 4H214Q222 4 225 14L236 44Q238 51 248 52z" fill="url(#tabOn)" stroke="#4a4a4a" /></TabShape>
          <TabIcon><FileIcon k="widget" /></TabIcon>
          <TabLabel w={130}>WB_InGame</TabLabel>
          <CloseMark faint />
        </FileTab>
        <Tutorial>
          <TutorialGlow>
            <svg width="36" height="36" viewBox="0 0 36 36"><path d="M3 10L19 4l14 7-12 9z" fill="#a9cdf3" /><path d="M8 15l12 6 10-6v11l-11 6-11-7z" fill="#6288c4" /><path d="M6 12v18" stroke="#d8a860" strokeWidth="3" /></svg>
          </TutorialGlow>
        </Tutorial>
        <WinButtons>
          <WinButton w={52}><svg width="22" height="20"><path d="M0 13h22v6H0z" fill="#fff" /></svg></WinButton>
          <WinButton w={48}><svg width="22" height="24"><path d="M7 5V2h13v14h-4M2 7h12v14H2z" fill="none" stroke="#fff" strokeWidth="3" /></svg></WinButton>
          <WinButton w={81}><svg width="22" height="20"><path d="M2 1l18 18M20 1L2 19" stroke="#fff" strokeWidth="5" /></svg></WinButton>
        </WinButtons>
      </TitleBar>

      <MenuBar>
        {[["File", 77], ["Edit", 82], ["Asset", 102], ["View", 92], ["Debug", 110], ["Window", 128], ["Help", 80]].map(([t, w]) => (
          <MenuItem key={t} w={w}>{t}</MenuItem>
        ))}
        <ParentClass>Parent class:</ParentClass>
        <ParentLink>User Widget</ParentLink>
      </MenuBar>

      <Toolbar>
        <Corner />
        <ToolButton w={120}><CompileIcon />Compile</ToolButton>
        <CaretCell w={50}><Caret /></CaretCell>
        <Divider ml={15} />
        <ToolButton w={100} ml={18}><SaveIcon />Save</ToolButton>
        <ToolButton w={110}><BrowseIcon />Browse</ToolButton>
        <Divider ml={14} />
        <ToolButton w={238}><ReflectorIcon />Widget Reflector</ToolButton>
        <Divider />
        <ToolButton w={132} ml={1}><PlayIcon />Play</ToolButton>
        <CaretCell w={29}><Caret /></CaretCell>
        <DebugFilter>
          <Combo>No debug object selected<Caret ml={4} c="#111" s={9} /></Combo>
          Debug Filter
        </DebugFilter>
        <ModeSwitch>
          <DesignerMode><DesignerIcon />Designer</DesignerMode>
          <IconCell w={30}><svg width="16" height="40"><path d="M2 1l12 19L2 39" fill="none" stroke="#aaa" strokeWidth="2" /></svg></IconCell>
          <IconCell w={14} />
          <GraphIcon />
          <ModeLabel>Graph</ModeLabel>
        </ModeSwitch>
      </Toolbar>

      <Workspace>
        <LeftColumn>
          <Dock h={638} mb={10}>
            <DockTabs><DockTab><PaletteIcon /><DockTabText>Palette</DockTabText><CloseMark /></DockTab></DockTabs>
            <DockBody pad="0 0 4px">
              <SearchRow pad="12px 12px 8px"><Search>Search Palette<Magnifier /></Search></SearchRow>
              <Scroller>
                <ScrollList w={536}>
                  <GroupHeader><Tri />Common</GroupHeader>
                  {palette.map(([k, t]) => (
                    <PaletteRow key={t}><Star /><WidgetIcon k={k} />{t}</PaletteRow>
                  ))}
                  <GroupHeader><Tri open={false} />Editor</GroupHeader>
                  <GroupHeader><Tri open={false} />Input</GroupHeader>
                </ScrollList>
                <ScrollTrack ml={5} mt={4}><ScrollThumb h={346} /></ScrollTrack>
              </Scroller>
            </DockBody>
          </Dock>
          <Dock h={638}>
            <DockTabs><DockTab><HierIcon /><DockTabText>Hierarchy</DockTabText><CloseMark /></DockTab></DockTabs>
            <DockBody pad="0 0 8px">
              <SearchRow pad="16px 16px 8px"><Search>Search Widgets<Magnifier /></Search></SearchRow>
              <Scroller>
                <ScrollList w={536}>
                  <TreeRow indent={9} bold><Tri /><IconCell w={6} /><TreeLabel>[WB_InGame_Finish]</TreeLabel></TreeRow>
                  {tree.map(([lvl, open, k, t, bold, locked], i) => (
                    <TreeRow key={i} indent={9 + lvl * 20} bold={bold}>
                      <IconCell w={17}>{open ? <Tri /> : null}</IconCell>
                      <IconCell>{<WidgetIcon k={k} />}</IconCell>
                      <IconCell w={2} />
                      <TreeLabel>{t}</TreeLabel>
                      <RowTools><Lock open={!locked} /><Eye /></RowTools>
                    </TreeRow>
                  ))}
                </ScrollList>
                <ScrollTrack ml={1} mt={4}><ScrollThumb h={454} /></ScrollTrack>
              </Scroller>
            </DockBody>
          </Dock>
        </LeftColumn>

        <Viewport>
          <CornerMark />
          <HRuler />
          <VRuler />
          <Canvas>
            <Artboard>
              <BoardTitle><Stretch x={0.99}><b>G</b>AME <b>O</b>VER</Stretch></BoardTitle>
              <ScoreBorder>
                <StatRow><Stretch x={1.0} o="left"><big>T</big>OTAL <big>K</big>ILLS</Stretch><Score><Stretch x={1.22} o="right">000</Stretch></Score></StatRow>
                <StatRow><Stretch x={1.036} o="left"><big>T</big>IME <big>B</big>ONUS</Stretch><Score><Stretch x={1.22} o="right">000</Stretch></Score></StatRow>
              </ScoreBorder>
              <ButtonBar>
                <GoldButton>MAIN MENU</GoldButton>
                <GoldButton>PLAY AGAIN</GoldButton>
              </ButtonBar>
            </Artboard>
            <CanvasNote top={8} ls={-1.3}>Zoom -3</CanvasNote>
            <CanvasNote bottom={103}>Device Content Scale 1.0</CanvasNote>
            <CanvasNote bottom={53} ls={-1.25}>No Device Safe Zone Set</CanvasNote>
            <CanvasNote ls={-0.2}>1280 x 720 (16:9)</CanvasNote>
            <CanvasNote right={69} ls={-0.8}>DPI Scale 0.67</CanvasNote>
            <OnCanvas x={2306} y={1200}><svg width="36" height="36"><Gear cx={18} cy={18} r={15} c="#9fb2ea" hole={0.68} /></svg></OnCanvas>
            <OnCanvas x={2063} y={1129}>
              <svg width="40" height="40" viewBox="0 0 40 40"><path d="M2 2h14l-4 4 8 8-5 5-8-8-5 5zM38 38H24l4-4-8-8 5-5 8 8 5-5z" fill="#fff" stroke="#333" /></svg>
            </OnCanvas>
            <ViewTools>
              <Pill>
                <PillPart w={46}>
                  <svg width="34" height="34" viewBox="0 0 34 34"><circle cx="17" cy="17" r="14" fill="#c6c6c6" stroke="#222" strokeWidth="2" /><path d="M6 9l8-4 3 4-5 6-3 4 5 3-2 7C8 28 4 22 4 15zM20 6l7 3 3 7-3 9-4 2-1-8-4-3z" fill="#1c1c1c" /></svg>
                </PillPart>
                <PillPart w={95}><Tiny up>None</Tiny><Caret s={4} c="#111" /></PillPart>
              </Pill>
              <Pill ml={5}><PillPart w={45} t="orange"><svg width="34" height="34"><rect x="4" y="4" width="26" height="26" fill="none" stroke="#d6b98a" strokeWidth="2" strokeDasharray="4 2" /></svg></PillPart></Pill>
              <Pill><PillPart w={45} t="orange"><svg width="24" height="30" viewBox="0 0 24 30"><rect x="2" y="12" width="20" height="15" fill="#2a1b02" /><path d="M7 12V8q0-5 5-5t5 5v4" stroke="#2a1b02" fill="none" strokeWidth="3" /></svg></PillPart></Pill>
              <Pill ml={5}>
                <PillPart w={47} t="orange"><svg width="30" height="30"><path d="M1 4h7v4H1zM1 10h7v14H1zM11 3h17v7H11zM11 12h17v14H11z" fill="#3a3a3a" /></svg></PillPart>
                <PillPart w={47} nb><Tiny c="#444">R</Tiny></PillPart>
              </Pill>
              <Pill ml={5}>
                <PillPart w={47} t="orange"><svg width="28" height="28"><path d="M1.500 1.500h25v25h-25zM7.500 1v26M14 1v26M20.500 1v26M1 7.500h26M1 14h26M1 20.500h26" fill="none" stroke="#111" strokeWidth="2.500" /></svg></PillPart>
                <PillPart w={50}><Tiny up>4</Tiny><Caret s={4} c="#111" /></PillPart>
              </Pill>
              <Pill h={48}><PillPart w={44}><svg width="34" height="34"><path d="M5 17h24M17 6v22M7 2h20M7 32h20M2 8v18M32 8v18M13 10l4-4 4 4M13 24l4 4 4-4M9 13l-4 4 4 4M25 13l4 4-4 4" stroke="#444" strokeWidth="2" fill="none" /></svg></PillPart></Pill>
              <Pill h={48}><PillPart w={44} t="dark"><svg width="32" height="26"><rect x="1" y="1" width="30" height="24" fill="none" stroke="#333" strokeWidth="2" /><circle cx="7" cy="7" r="3" fill="#222" /><path d="M3 23l9-12 5 6 5-7 8 13z" fill="#222" /></svg></PillPart></Pill>
              <Pill h={48}><PillPart w={44} t="dark"><svg width="34" height="30"><path d="M13 2v26H2zM21 2v26h11z" fill="none" stroke="#333" strokeWidth="2" /><path d="M21 2v26h11z" fill="#2c2c2c" /><path d="M17 0v30" stroke="#333" strokeDasharray="3 2" /></svg></PillPart></Pill>
              <Pill h={43}><PillText w={162}>Screen Size<Caret ml={4} c="#111" /></PillText></Pill>
              <Pill h={43}><PillText w={148}>Fill Screen<Caret ml={6} c="#111" /></PillText></Pill>
            </ViewTools>
          </Canvas>
        </Viewport>

        <Details h={1287}>
          <DockTabs><DockTab><DetailsIcon /><DockTabText>Details</DockTabText><CloseMark /></DockTab></DockTabs>
          <DockBody />
        </Details>
      </Workspace>

      <Bottom>
        <Dock w={573} h={551}>
          <DockTabs><DockTab><AnimIcon /><DockTabText>Animations</DockTabText><CloseMark /></DockTab></DockTabs>
          <DockBody>
            <SearchRow pad="14px 15px 5px 12px">
              <AnimButton><svg width="22" height="22"><path d="M8 1h6v7h7v6h-7v7H8v-7H1V8h7z" fill="#fff" /></svg>Animation</AnimButton>
              <Search>Search Animations<Magnifier /></Search>
            </SearchRow>
            <AnimItem>IntroAnim</AnimItem>
            <AnimItem>BonusAnim</AnimItem>
          </DockBody>
        </Dock>
        <Dock w={3249} h={551}>
          <DockTabs>
            <DockTab><TimelineIcon /><DockTabText>Timeline</DockTabText><CloseMark /></DockTab>
            <DockTab dim><CompilerIcon /><DockTabText>Compiler Results</DockTabText><CloseMark /></DockTab>
          </DockTabs>
          <DockBody>
            <TimeBar>
              <Slot w={62} pl={18}><svg width="36" height="36" viewBox="0 0 36 36"><path d="M1 2l6 6 5-1V2c6 1 8 6 6 11l15 15c3 4-2 8-5 5L14 18C7 20 1 13 1 2z" fill="#8f8f8f" /><circle cx="30" cy="30" r="2" fill="#414141" /></svg></Slot>
              <Slot w={26}><Caret c="#8a8a8a" /></Slot>
              <Slot w={78} pl={16}><svg width="24" height="30"><path d="M2 1l20 14L2 29z" fill="#929292" /></svg></Slot>
              <Slot w={10}><Caret c="#8a8a8a" /></Slot>
              <Slot w={112}><svg width="28" height="28"><rect x="2" y="2" width="24" height="24" fill="none" stroke="#8a8a8a" strokeWidth="2" strokeDasharray="3 2" /></svg></Slot>
              <Slot w={12} ml={-26}><Caret c="#8a8a8a" /></Slot>
              <Slot w={22} sep />
              <Slot w={75}><svg width="42" height="42" viewBox="0 0 40 40">{diamond}</svg></Slot>
              <Slot w={6} ml={-2}><Caret c="#8a8a8a" /></Slot>
              <Slot w={106} sep pl={14}><svg width="42" height="42" viewBox="0 0 40 40"><path d="M20 1l19 19-19 19L1 20z" fill="#929292" /><circle cx="17" cy="15" r="5" fill="none" stroke="#414141" strokeWidth="3" /><path d="M20 19l8 9M24 25l4-3" stroke="#414141" strokeWidth="3" /></svg></Slot>
              <Slot w={9} />
              <MagnetSlot w={64}><svg width="38" height="42" viewBox="0 0 38 42"><path d="M4 32V17a15 15 0 0130 0v15h-9V17a6 6 0 00-12 0v15z" fill="#919191" /><path d="M4 34h9v6H4zM25 34h9v6h-9z" fill="#989898" /></svg></MagnetSlot>
              <Slot w={62} sep><Caret c="#8a8a8a" /></Slot>
              <Slot w={116} sep>20 fps<Caret c="#8a8a8a" ml={4} /></Slot>
              <Slot w={88}><svg width="48" height="42" viewBox="0 0 48 42"><path d="M3 0v34" stroke="#888" strokeWidth="2" /><path d="M2 37h44v4H2z" fill="#777" /><path d="M3 20C12 8 18 12 26 22s14 12 20 0" fill="none" stroke="#8f8f8f" strokeWidth="2" /></svg></Slot>
              <LockCorner><Lock open c="#8a8a8a" /></LockCorner>
            </TimeBar>
            <TimeMain>
              <TrackPane>
                <TrackHead>
                  <TrackButton><svg width="22" height="22"><path d="M8 1h6v7h7v6h-7v7H8v-7H1V8h7z" fill="#a2a2a2" /></svg>Track<Caret c="#aaa" s={7} /></TrackButton>
                  <FilterBox><svg width="22" height="22"><path d="M1 1h20l-7 8v12l-6-3V9z" fill="#9a9a9a" /></svg><IconCell w={3} />Filters<Caret c="#9a9a9a" ml={5} /></FilterBox>
                  <Search dim w={592}>Search Tracks<Magnifier c="#2e2e2e" /></Search>
                  <TimeValue>0.00</TimeValue>
                </TrackHead>
                <Transport>
                  <svg width="520" height="66" viewBox="818 2008 520 66" fill="#868686">
                    <path d="M821 2023h3l8 6-5 4v16l5 4-8 6h-3z" />
                    <path d="M868 2027v29l-15-14zM871 2027h6v29h-6zM879 2027h5v29h-5zM887 2027h4v29h-4z" />
                    <path d="M918 2027v29l-17-14z" />
                    <path d="M931 2033l8 9-8 9-8-9z" fill="none" stroke="#868686" strokeWidth="3" />
                    <path d="M969 2027v29l-14-14zM972 2027h4v29h-4zM978 2027h4v29h-4z" />
                    <path d="M1036 2022v37l-32-18zM1062 2022v37l32-18z" />
                    <path d="M1119 2027h4v29h-4zM1126 2027h4v29h-4zM1132 2027v29l14-14z" />
                    <path d="M1168 2033l8 9-8 9-8-9z" fill="none" stroke="#868686" strokeWidth="3" />
                    <path d="M1180 2027v29l17-14zM1207 2027h4v29h-4zM1214 2027h5v29h-5zM1222 2027h5v29h-5zM1230 2027v29l15-14z" />
                    <path d="M1276 2023h-3l-8 6 5 4v16l-5 4 8 6h3z" />
                    <path d="M1293 2038h20v-5l12 8-12 9v-5h-20z" />
                  </svg>
                </Transport>
              </TrackPane>
              <Curves>
                <Marks />
                <TimeBody><Notice>No Animation Selected</Notice></TimeBody>
                <Marks bottom />
                <PlayHead><svg width="26" height="52"><path d="M1 1h24v38L13 51 1 39z" fill="#7d6a65" /><path d="M13 20v32" stroke="#4c7a44" strokeWidth="2" /></svg>0.00</PlayHead>
                <PlayHead bottom><svg width="26" height="66"><path d="M1 65h24V15L13 1 1 15z" fill="#7d6a65" /><path d="M13 0v65" stroke="#6f7d63" strokeWidth="2" /></svg>0.00</PlayHead>
              </Curves>
            </TimeMain>
          </DockBody>
        </Dock>
      </Bottom>

      <Taskbar>
        <SysButton><svg width="32" height="32"><path d="M0 5l14-2v12H0zM16 2.500L32 0v15H16zM0 17h14v12L0 27zM16 17h16v15l-16-2.500z" fill="#fff" /></svg></SysButton>
        <SysButton><svg width="32" height="32"><circle cx="20" cy="11" r="10" fill="none" stroke="#fff" strokeWidth="2" /><path d="M13 18L1 31" stroke="#fff" strokeWidth="2" /></svg></SysButton>
        <SysButton><svg width="34" height="34"><circle cx="17" cy="17" r="13.500" fill="none" stroke="#fff" strokeWidth="4" /></svg></SysButton>
        <SysButton><svg width="32" height="32"><path d="M1 0v6h20V0M1 32v-6h20v6M1 10h20v12H1zM28 0v8M28 14v18" fill="none" stroke="#fff" strokeWidth="2" /><path d="M25 9h6v5h-6z" fill="#fff" /></svg></SysButton>
        <SysButton w={104} pl={4}>
          <svg width="48" height="48" viewBox="0 0 48 48"><path d="M0 16l5-4 32 25v9z" fill="#0a86cc" /><path d="M0 31l5 5L37 11V2z" fill="#0f73b8" /><path d="M36 1l12 5v36l-12 5z" fill="#26a2ee" /></svg>
        </SysButton>
        <Task>
          <svg width="48" height="48" viewBox="0 0 48 48"><circle cx="24" cy="24" r="22" fill="#fbc116" /><path d="M24 24L5 13a22 22 0 0016 33l8-14z" fill="#1a9b57" /><path d="M5 13a22 22 0 0139 1H24v10z" fill="#dd4b3e" /><circle cx="24" cy="24" r="10.500" fill="#fff" /><circle cx="24" cy="24" r="8.500" fill="#4a8af4" /></svg>
          combo - Bing 词典...
        </Task>
        {["2020职业联赛：O...", "WeGame"].map((t) => (
          <Task key={t}>
            <svg width="48" height="48" viewBox="0 0 48 48"><rect width="48" height="48" rx="9" fill="#231f20" /><path d="M34 13A15 15 0 1035 34V22h-7" fill="none" stroke="#fdbe0d" strokeWidth="4" /><path d="M13 22l5 6 5-5 5 5" fill="none" stroke="#fdbe0d" strokeWidth="3" /></svg>
            {t}
          </Task>
        ))}
        <Task>
          <svg width="46" height="48" viewBox="0 0 46 48"><path d="M10 5h26v35H10z" fill="#e9c25f" /><path d="M16 8h20v31H16z" fill="#fbe08c" /><path d="M9 5l8 4v38l-8-7z" fill="#f8d877" /></svg>
          day16-怪物生成和...
        </Task>
        <Task>
          <svg width="48" height="48" viewBox="0 0 48 48"><path d="M0 14l5-3 32 26v9z" fill="#7a3cc0" /><path d="M0 34l5 3L37 11V2z" fill="#9a5ce0" /><path d="M0 14v20l6-3V17z" fill="#5c2d91" /><path d="M36 1l12 5v36l-12 5z" fill="#b57cf0" /></svg>
          ActionRPG (Runni...
        </Task>
        <Task active>
          <svg width="48" height="48" viewBox="0 0 48 48"><circle cx="24" cy="24" r="21.500" fill="#2c2a29" stroke="#eee" /><g transform="translate(6 6) scale(.75)"><Unreal s={48} c="#fff" /></g></svg>
          ActionRPG [Debu...
        </Task>
        <Task>
          <svg width="48" height="48" viewBox="0 0 48 48"><path d="M5 2q6 3 19 2 13 1 19-2l3 9q-3 13 0 26l-3 9q-6-3-19-2-13-1-19 2l-3-9q3-13 0-26z" fill="#f1f1f1" /><path d="M15 19v-5h18v5M24 14v21M20 35h8" fill="none" stroke="#444" strokeWidth="2" /></svg>
          README.md - Typ...
        </Task>
        <Task>
          <svg width="48" height="48" viewBox="0 0 48 48"><path d="M18 5c11 0 18 7 18 15s-8 15-18 15l-5-1-6 4 1-6C-7 24 1 5 18 5z" fill="#2bdc6c" /><circle cx="12" cy="15" r="2.500" fill="#1a7a3c" /><circle cx="24" cy="15" r="2.500" fill="#1a7a3c" /><path d="M33 18c8 0 14 6 14 12 0 4-2 7-5 9l1 5-5-3c-11 2-19-4-19-11s6-12 14-12z" fill="#eee" /><circle cx="28" cy="27" r="2" fill="#777" /><circle cx="38" cy="27" r="2" fill="#777" /></svg>
          微信
        </Task>
        <Tray>
          <TrayCell w={48}><svg width="28" height="16"><path d="M2 14L14 2l12 12" fill="none" stroke="#fff" strokeWidth="2" /></svg></TrayCell>
          <TrayCell w={49}><svg width="34" height="34"><path d="M9 5h24v19H9M17 24v7M8 31h18M2 5h9v9H2zM6 14v10" fill="none" stroke="#fff" strokeWidth="2" /></svg></TrayCell>
          <TrayCell w={46}><svg width="36" height="32"><path d="M1 11h5l8-8v26l-8-8H1z" fill="none" stroke="#fff" strokeWidth="2" /><path d="M19 11q4 5 0 10M24 7q7 9 0 18" fill="none" stroke="#fff" strokeWidth="2" /><path d="M29 3q10 13 0 26" fill="none" stroke="#7c8498" strokeWidth="2" /></svg></TrayCell>
          <TrayCell w={44} fs={34}>中</TrayCell>
          <TrayCell w={75}><Ime>拼</Ime></TrayCell>
          <Clock>20:35<br />2020/7/10</Clock>
          <TrayCell w={98}><svg width="34" height="34"><path d="M2 2h30v24H22l-5 6-5-6H2z" fill="none" stroke="#fff" strokeWidth="2.500" /></svg></TrayCell>
          <ShowDesktop />
        </Tray>
      </Taskbar>
      <RedFrame />
    </Screen>
  );
}
